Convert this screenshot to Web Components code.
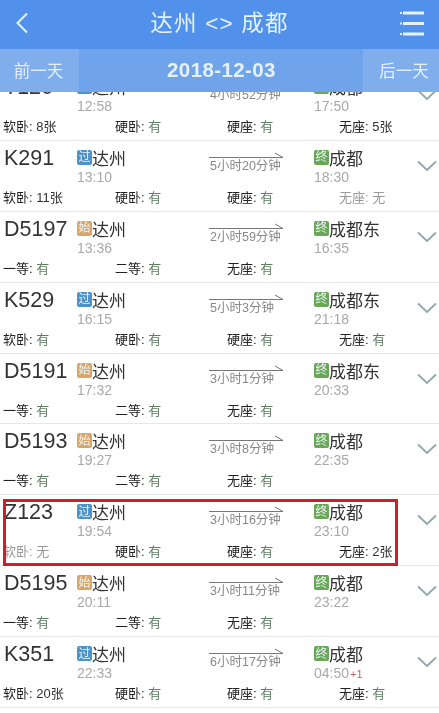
<!DOCTYPE html>
<html lang="zh">
<head>
<meta charset="utf-8">
<style>
  html, body { margin: 0; padding: 0; background: #fff; }
  body { width: 439px; height: 713px; overflow: hidden; font-family: "Liberation Sans", "Noto Sans CJK SC", sans-serif; filter: blur(0.35px); }
  .list { margin-top: -22px; }
</style>
</head>
<body>
<route-header from="达州" to="成都"></route-header>
<date-bar date="2018-12-03"></date-bar>
<div class="list" id="list"></div>

<script>
'use strict';

customElements.define(
  'route-header',
  class RouteHeader extends HTMLElement {
    constructor() {
      super();
      this.attachShadow({ mode: 'open' }).innerHTML = `
      <style>
      :host {
        display: flex;
        position: relative;
        z-index: 2;
        height: 49px;
        box-sizing: border-box;
        padding: 0 15px 0 15px;
        align-items: center;
        justify-content: space-between;
        background: #5191ec;
        color: #e4f3f8;
      }
      h1 {
        margin: 0 0 7px 10px;
        font-size: 22.5px;
        font-weight: 400;
        letter-spacing: 1.2px;
      }
      svg { display: block; }
      </style>
      <svg width="14" height="22" viewBox="0 0 14 22" style="margin-bottom:3px"><path d="M12 1.5 2.5 11 12 20.5" fill="none" stroke="#e4f3f8" stroke-width="2"/></svg>
      <h1>${this.getAttribute('from')} &lt;&gt; ${this.getAttribute('to')}</h1>
      <svg width="24" height="25" viewBox="0 0 24 25" fill="#e4f3f8" style="margin-bottom:3px"><rect x="0" y="1" width="2" height="2"/><rect x="3" y="0.5" width="21" height="3"/><rect x="0" y="11.5" width="2" height="2"/><rect x="3" y="11" width="21" height="3"/><rect x="0" y="22" width="2" height="2"/><rect x="3" y="21.5" width="21" height="3"/></svg>`;
    }
  }
);

customElements.define(
  'date-bar',
  class DateBar extends HTMLElement {
    constructor() {
      super();
      this.attachShadow({ mode: 'open' }).innerHTML = `
      <style>
      :host {
        display: grid;
        position: relative;
        z-index: 2;
        grid-template-columns: 79px 1fr 76px;
        height: 43px;
        background: #6fa3ea;
        color: #e4f1f8;
      }
      div {
        display: flex;
        align-items: center;
        justify-content: center;
        font-size: 16.5px;
        padding-bottom: 1px;
      }
      .side { background: #80aeec; }
      .prev { padding-right: 2px; }
      .next { padding-left: 6px; }
      .date { font-size: 20.5px; font-weight: 700; letter-spacing: 0.4px; padding-left: 1px; }
      </style>
      <div class="side prev">前一天</div>
      <div class="date">${this.getAttribute('date')}</div>
      <div class="side next">后一天</div>`;
    }
  }
);

customElements.define(
  'stop-badge',
  class StopBadge extends HTMLElement {
    constructor() {
      super();
      const colors = { 过: '#4d93c9', 始: '#dba565', 终: '#69a758' };
      const kind = this.getAttribute('kind');
      this.attachShadow({ mode: 'open' }).innerHTML = `
      <style>
      :host {
        display: inline-flex;
        width: 15px;
        height: 15px;
        border-radius: 2px;
        align-items: center;
        justify-content: center;
        background: ${colors[kind]};
        color: #eef6f4;
        font-size: 12px;
        line-height: 1;
      }
      </style>${kind}`;
    }
  }
);

customElements.define(
  'seat-count',
  class SeatCount extends HTMLElement {
    constructor() {
      super();
      const value = this.getAttribute('value');
      const none = value === '无';
      this.attachShadow({ mode: 'open' }).innerHTML = `
      <style>
      :host {
        display: block;
        font-size: 13px;
        line-height: 14px;
        white-space: nowrap;
        color: ${none ? '#9a9a9a' : '#222'};
      }
      b { font-weight: 400; color: ${none ? '#9a9a9a' : value === '有' ? '#5f7f63' : '#333'}; }
      </style>${this.getAttribute('label')}: <b>${value}</b>`;
    }
  }
);

customElements.define(
  'train-row',
  class TrainRow extends HTMLElement {
    constructor() {
      super();
      this.attachShadow({ mode: 'open' }).innerHTML = `
      <style>
      :host {
        display: block;
        position: relative;
        box-sizing: border-box;
        height: 70.9px;
        border-bottom: 1px solid #e8e8e8;
        color: #333;
      }
      .top {
        display: grid;
        box-sizing: border-box;
        grid-template-columns: 73px 132px 105px 1fr;
        height: 50px;
        padding: 6px 0 0 4px;
      }
      .code { font-size: 21.5px; line-height: 22px; }
      .stop {
        display: flex;
        align-items: center;
        height: 21px;
        font-size: 17px;
      }
      .time { margin-top: 1px; font-size: 14px; line-height: 16px; color: #a9a9a9; }
      .time i { font-style: normal; font-size: 11px; color: #b3655f; margin-left: 1px; }
      .span { width: 75px; font-size: 12.5px; line-height: 14px; color: #888; white-space: nowrap; padding-left: 1px; box-sizing: border-box; }
      .span svg { display: block; margin-left: -1px; }
      .chev { position: absolute; left: 417px; top: 19px; }
      .seats {
        display: grid;
        grid-template-columns: repeat(4, 112px);
        padding: 0 0 0 3px;
      }
      .mark {
        display: none;
        position: absolute;
        left: 3px;
        top: 4px;
        width: 395px;
        height: 67px;
        box-sizing: border-box;
        border: 3px solid #c4222c;
      }
      :host([marked]) .mark { display: block; }
      </style>
      <div class="top">
        <div class="code"><slot name="code"></slot></div>
        <div>
          <div class="stop"><slot name="from"></slot></div>
          <div class="time"><slot name="dep"></slot></div>
        </div>
        <div class="span">
          <svg width="75" height="12" viewBox="0 0 75 12"><path d="M0 10.5H74L66 6" fill="none" stroke="#777" stroke-width="1"/></svg>
          <slot name="span"></slot>
        </div>
        <div>
          <div class="stop"><slot name="to"></slot></div>
          <div class="time"><slot name="arr"></slot><i><slot name="plus"></slot></i></div>
        </div>
      </div>
      <svg class="chev" width="20" height="12" viewBox="0 0 20 12"><path d="M1 1.5 10 10 19 1.5" fill="none" stroke="#8fa8ac" stroke-width="1.8"/></svg>
      <div class="seats"><slot></slot></div>
      <div class="mark"></div>`;
    }
  }
);

const sleeper = ['软卧', '硬卧', '硬座', '无座'];
const highSpeed = ['一等', '二等', '无座'];
const trains = [
  ['T126', '过', '达州', '12:58', '4小时52分钟', '成都', '17:50', '', sleeper, ['8张', '有', '有', '5张']],
  ['K291', '过', '达州', '13:10', '5小时20分钟', '成都', '18:30', '', sleeper, ['11张', '有', '有', '无']],
  ['D5197', '始', '达州', '13:36', '2小时59分钟', '成都东', '16:35', '', highSpeed, ['有', '有', '有']],
  ['K529', '过', '达州', '16:15', '5小时3分钟', '成都东', '21:18', '', sleeper, ['有', '有', '有', '有']],
  ['D5191', '始', '达州', '17:32', '3小时1分钟', '成都东', '20:33', '', highSpeed, ['有', '有', '有']],
  ['D5193', '始', '达州', '19:27', '3小时8分钟', '成都', '22:35', '', highSpeed, ['有', '有', '有']],
  ['Z123', '过', '达州', '19:54', '3小时16分钟', '成都', '23:10', '', sleeper, ['无', '有', '有', '2张'], true],
  ['D5195', '始', '达州', '20:11', '3小时11分钟', '成都', '23:22', '', highSpeed, ['有', '有', '有']],
  ['K351', '过', '达州', '22:33', '6小时17分钟', '成都', '04:50', '+1', sleeper, ['20张', '有', '有', '有']],
];

const list = document.getElementById('list');
for (const [code, kind, from, dep, span, to, arr, plus, seats, values, marked] of trains) {
  const row = document.createElement('train-row');
  if (marked) row.setAttribute('marked', '');
  row.innerHTML = `
    <span slot="code">${code}</span>
    <stop-badge slot="from" kind="${kind}"></stop-badge><span slot="from">${from}</span>
    <span slot="dep">${dep}</span>
    <span slot="span">${span}</span>
    <stop-badge slot="to" kind="终"></stop-badge><span slot="to">${to}</span>
    <span slot="arr">${arr}</span><span slot="plus">${plus}</span>
    ${seats.map((label, i) => `<seat-count label="${label}" value="${values[i]}"></seat-count>`).join('')}`;
  list.appendChild(row);
}
</script>
</body>
</html>
